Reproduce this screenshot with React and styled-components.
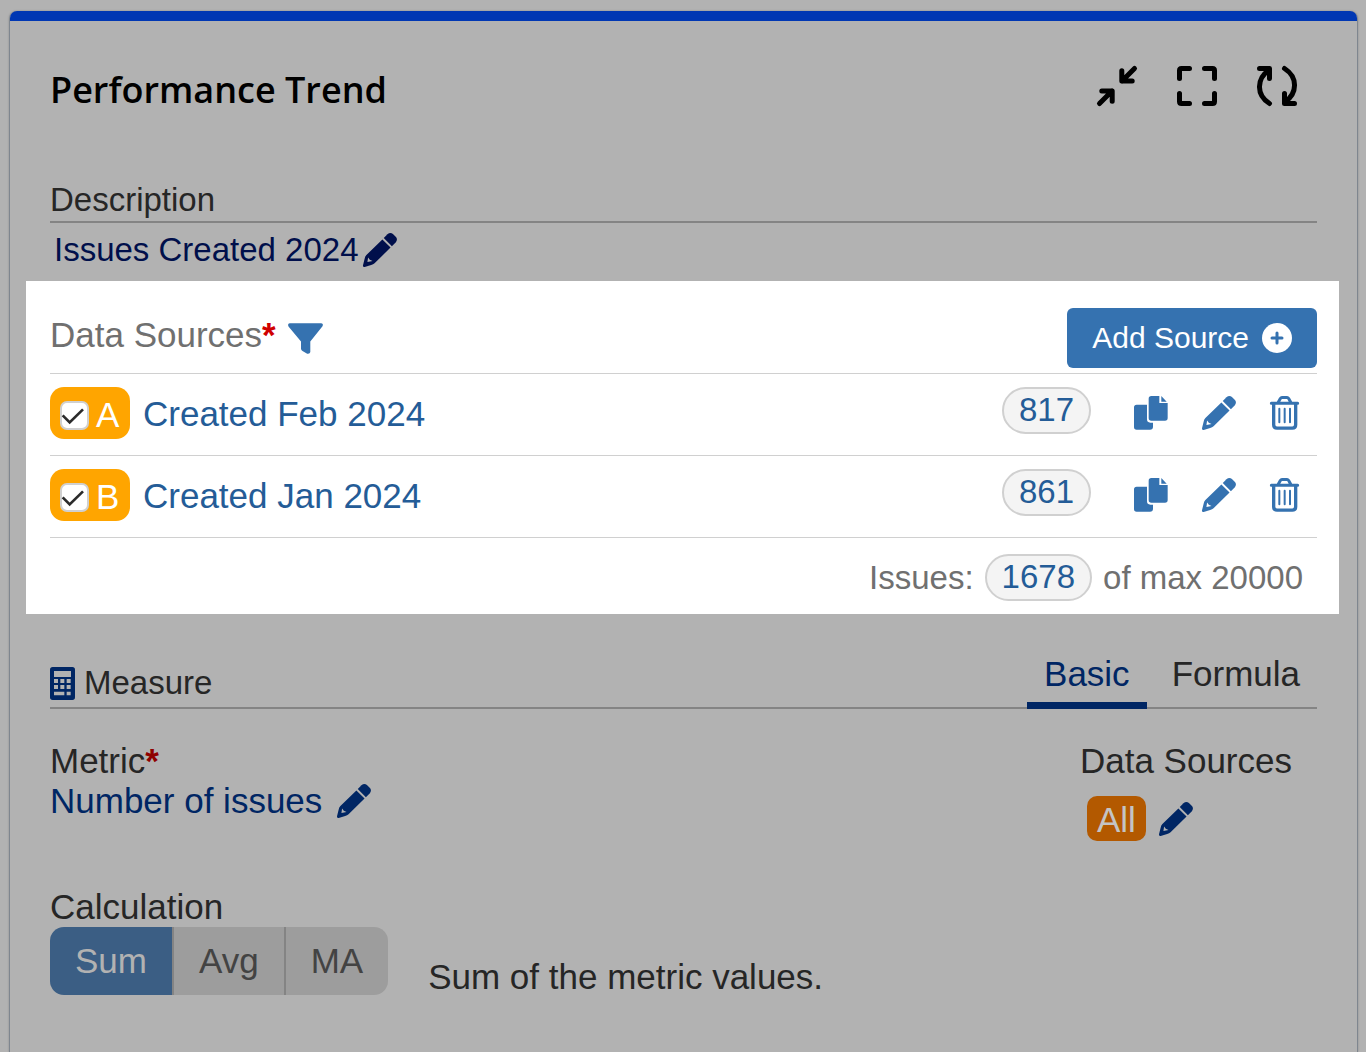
import React, { useState } from "react";
import styled, { createGlobalStyle } from "styled-components";

const c = {
  page: "#b2b2b2",
  rule: "#848484",
  dimText: "#262626",
  dimBlue: "#002664",
  navy: "#000f4b",
  grey: "#707070",
  blue: "#3572b0",
  link: "#245c97",
  line: "#d0d0d0",
};

const GlobalStyle = createGlobalStyle`
  * { box-sizing: border-box; }
  body {
    margin: 0;
    background: ${c.page};
    color: ${c.dimText};
    font-family: "Liberation Sans", Arial, sans-serif;
    font-size: 35px;
    line-height: 40px;
  }
  button { font: inherit; color: inherit; border: 0; padding: 0; background: none; cursor: pointer; }
  a { color: inherit; text-decoration: none; }
  h1, h2, ul, p { margin: 0; padding: 0; font-weight: 400; font-size: inherit; }
  svg { display: block; flex: none; overflow: visible; }
`;

const Card = styled.main`
  margin: 11px 8px 0 9px;
  min-height: calc(100vh - 11px);
  border: 1px solid #7f868f;
  border-width: 0 1px;
  border-radius: 8px 8px 0 0;
  box-shadow: 0 0 2px rgba(0, 0, 0, 0.25);
  &::before {
    content: "";
    display: block;
    height: 10px;
    border-radius: 7px 7px 0 0;
    background: #0037b3;
  }
`;

const Section = styled.section`
  padding: 0 40px;
`;

const Header = styled.header`
  display: flex;
  align-items: center;
  justify-content: space-between;
  padding: 45px 60px 0 40px;
`;

const Title = styled.h1`
  && {
    font-family: "Open Sans", "Noto Sans", sans-serif;
    font-size: 36px;
    font-weight: 600;
  }
  padding-top: 4px;
  margin-bottom: -4px;
  color: #000;
`;

const Tools = styled.div`
  display: flex;
  gap: 40px;
  color: #000;
`;

const Field = styled.div`
  margin-top: 74px;
  font-size: 33px;
`;

const Underlined = styled.h2`
  padding-bottom: 1px;
  border-bottom: 2px solid ${c.rule};
`;

const Inline = styled.div`
  display: flex;
  align-items: center;
  gap: ${(p) => p.$gap || 4}px;
  padding: ${(p) => p.$pad || "0"};
  color: ${(p) => p.$color || "inherit"};
`;

const Spotlight = styled.section`
  margin: 11px 18px 0 16px;
  padding: 27px 22px 13px 24px;
  background: #fff;
  color: ${c.grey};
`;

const SpotHead = styled.div`
  display: flex;
  justify-content: space-between;
  align-items: flex-start;
  padding-bottom: 5px;
`;

const Required = styled.span`
  font-weight: 700;
  color: ${(p) => (p.$dim ? "#8f0000" : "#d00000")};
`;

const IconButton = styled.button`
  color: ${(p) => p.$color || "inherit"};
`;

const FilterButton = styled(IconButton)`
  && { padding-top: 6px; }
`;

const AddButton = styled.button`
  && { padding: 0 25px; color: #fff; background: ${c.blue}; font-size: 30px; }
  height: 60px;
  border-radius: 6px;
  display: flex;
  align-items: center;
  gap: 13px;
`;

const List = styled.ul`
  list-style: none;
  border-top: 1px solid ${c.line};
`;

const Row = styled.li`
  display: flex;
  align-items: flex-start;
  padding: 13px 18px 16px 0;
  border-bottom: 1px solid ${c.line};
`;

const Tag = styled.label`
  display: flex;
  align-items: center;
  gap: 7px;
  width: 80px;
  height: 52px;
  padding: 4px 0 0 10px;
  border-radius: 14px;
  background: #ffa500;
  color: #fff;
`;

const CheckWrap = styled.span`
  display: grid;
  place-items: center;
  svg { grid-area: 1 / 1; pointer-events: none; }
`;

const CheckInput = styled.input`
  grid-area: 1 / 1;
  appearance: none;
  width: 29px;
  height: 29px;
  margin: 0;
  border: 2px solid ${c.line};
  border-radius: 7px;
  background: #fff;
  & + svg { visibility: hidden; }
  &:checked + svg { visibility: visible; }
`;

const SourceLink = styled.a`
  flex: 1;
  padding: 7px 13px 0;
  && { color: ${c.link}; }
`;

const Pill = styled.a`
  height: 47px;
  padding: 1px 15px 0;
  border: 2px solid ${c.line};
  border-radius: 24px;
  background: #f4f4f4;
  && { color: ${c.link}; }
  font-size: 33px;
`;

const Actions = styled.div`
  display: flex;
  align-items: center;
  gap: 34px;
  height: 52px;
  margin-left: 43px;
  color: ${c.blue};
`;

const Total = styled.div`
  display: flex;
  align-items: center;
  justify-content: flex-end;
  gap: 11px;
  padding: 16px 14px 0 0;
  font-size: 33px;
`;

const MeasureBar = styled.div`
  display: flex;
  align-items: flex-end;
  justify-content: space-between;
  margin-top: 40px;
  border-bottom: 2px solid ${c.rule};
`;

const MeasureTitle = styled.h2`
  && { font-size: 33px; }
  display: flex;
  align-items: center;
  gap: 9px;
  padding-bottom: 4px;
  svg { color: ${c.dimBlue}; }
`;

const Tabs = styled.div`
  display: flex;
  gap: 8px;
  margin-bottom: -2px;
`;

const Tab = styled.button`
  && {
    padding: 0 17px 8px;
    border-bottom: 7px solid ${(p) => (p["aria-selected"] ? c.dimBlue : "transparent")};
    color: ${(p) => (p["aria-selected"] ? c.dimBlue : c.dimText)};
  }
`;

const Columns = styled.div`
  display: flex;
  justify-content: space-between;
  padding: 32px 25px 0 0;
`;

const Badge = styled.span`
  padding: 4px 10px 1px;
  border-radius: 10px;
  background: #b35900;
  color: #c4c4c4;
`;

const Calculation = styled.div`
  padding-top: 46px;
`;

const CalcRow = styled.div`
  display: flex;
  align-items: flex-start;
  gap: 40px;
`;

const Segments = styled.div`
  display: flex;
  border-radius: 14px;
  overflow: hidden;
`;

const Segment = styled.button`
  && {
    padding: 0 25px;
    background: ${(p) => (p["aria-pressed"] ? "#3b5e84" : "#9d9d9d")};
    color: ${(p) => (p["aria-pressed"] ? c.page : "#434343")};
  }
  height: 68px;
  & + & { border-left: 2px solid ${c.rule}; }
`;

const Hint = styled.p`
  padding-top: 30px;
`;

const Stroke = ({ d }) => (
  <svg width="40" height="40" viewBox="0 0 40 40" fill="none" stroke="currentColor" strokeWidth="5" strokeLinecap="round" strokeLinejoin="round" aria-hidden="true">
    <path d={d} />
  </svg>
);

const Pencil = ({ notch = "#fff" }) => (
  <svg width="34" height="34" viewBox="0 0 100 100" fill="currentColor" aria-hidden="true">
    <path d="M61 15L72 4Q80-3 88 3L97 12Q103 20 96 28L85 39Z" />
    <path d="M57 19L81 43L34 89Q30 93 24 94L5 100Q-1 101 0 95L5 75Q6 69 10 65Z" />
    <path d="M15 72L13 85L28 82L20 79Z" fill={notch} />
  </svg>
);

const Copy = () => (
  <svg width="34" height="34" viewBox="0 0 102 102" fill="currentColor" aria-hidden="true">
    <path d="M52 0H76V21H101V66Q101 74 93 74H52Q44 74 44 66V8Q44 0 52 0Z" />
    <path d="M82 0L98 17H82Z" />
    <path d="M8 26H39V70Q39 80 49 80H57V92Q57 101 48 101H8Q0 101 0 93V34Q0 26 8 26Z" />
  </svg>
);

const Trash = () => (
  <svg width="29" height="34" viewBox="0 0 87 101" fill="none" stroke="currentColor" aria-hidden="true">
    <path d="M4 21H83M24 20L31 7Q33 4 36 4H51Q54 4 56 7L63 20" strokeWidth="9" strokeLinecap="round" />
    <path d="M11 22V86Q11 96 21 96H67Q77 96 77 86V22" strokeWidth="10" />
    <path d="M28 38V78M44 38V78M60 38V78" strokeWidth="6" strokeLinecap="round" />
  </svg>
);

const Funnel = () => (
  <svg width="35" height="31" viewBox="0 0 35 31" fill="currentColor" aria-hidden="true">
    <path d="M2 .3H33Q35.800.6 34.500 3.200L22.300 18.500V29Q22 31.200 19.200 30.700L14.500 28Q13 27 13 25.500V18.500L.5 3.400Q-.8.7 2 .3Z" />
  </svg>
);

const PlusCircle = () => (
  <svg width="30" height="30" viewBox="0 0 30 30" aria-hidden="true">
    <circle cx="15" cy="15" r="15" fill="#fff" />
    <path d="M15 10V20M10 15H20" stroke={c.blue} strokeWidth="3" strokeLinecap="round" />
  </svg>
);

const Calculator = () => (
  <svg width="25" height="33" viewBox="0 0 75 99" fill="currentColor" fillRule="evenodd" aria-hidden="true">
    <path d="M8 0H67Q75 0 75 8V91Q75 99 67 99H8Q0 99 0 91V8Q0 0 8 0ZM12 12V30H63V12ZM12 36V48H24V36ZM31 36V48H43V36ZM50 36V48H62V36ZM12 54V66H24V54ZM31 54V66H43V54ZM50 54V66H62V54ZM12 74V85H43V74ZM50 74V85H62V74Z" />
  </svg>
);

const sources = [
  { id: "A", name: "Created Feb 2024", count: 817 },
  { id: "B", name: "Created Jan 2024", count: 861 },
];

function SourceRow({ source }) {
  const [on, setOn] = useState(true);
  return (
    <Row>
      <Tag>
        <CheckWrap>
          <CheckInput type="checkbox" checked={on} onChange={(e) => setOn(e.target.checked)} />
          <svg width="29" height="29" viewBox="0 0 87 87" fill="none" stroke="#2b2b2b" strokeWidth="8" aria-hidden="true">
            <path d="M8 43L29 64L69 25" />
          </svg>
        </CheckWrap>
        {source.id}
      </Tag>
      <SourceLink href="#source">{source.name}</SourceLink>
      <Pill href="#issues">{source.count}</Pill>
      <Actions>
        <IconButton aria-label="Copy source"><Copy /></IconButton>
        <IconButton aria-label="Edit source"><Pencil /></IconButton>
        <IconButton aria-label="Delete source"><Trash /></IconButton>
      </Actions>
    </Row>
  );
}

export default function App() {
  const [tab, setTab] = useState("Basic");
  const [calc, setCalc] = useState("Sum");
  return (
    <>
      <GlobalStyle />
      <Card>
        <Header>
          <Title>Performance Trend</Title>
          <Tools>
            <IconButton aria-label="Minimize">
              <Stroke d="M24.800 4.800V15H35.200M37.500 2.500L25 15M4.800 25H15.200V35.200M2.500 37.500L15 25" />
            </IconButton>
            <IconButton aria-label="Full screen">
              <Stroke d="M2.500 12.500V4.500Q2.500 2.500 4.500 2.500H12.500M27.500 2.500H35.500Q37.500 2.500 37.500 4.500V12.500M37.500 27.500V35.500Q37.500 37.500 35.500 37.500H27.500M12.500 37.500H4.500Q2.500 37.500 2.500 35.500V27.500" />
            </IconButton>
            <IconButton aria-label="Refresh">
              <Stroke d="M2.500 2.500H12.500V12.500M12.500 37.500C-.8 29-.8 13 12 4M37.500 37.500H27.500V27.500M27.500 2.500C40.800 11 40.800 27 28 36" />
            </IconButton>
          </Tools>
        </Header>

        <Section>
          <Field>
            <Underlined>Description</Underlined>
            <Inline $pad="7px 0 0 4px" $color={c.navy}>
              <span>Issues Created 2024</span>
              <IconButton aria-label="Edit description"><Pencil notch={c.page} /></IconButton>
            </Inline>
          </Field>
        </Section>

        <Spotlight>
          <SpotHead>
            <Inline $gap={12} $pad="7px 0 0">
              <h2>Data Sources<Required>*</Required></h2>
              <FilterButton aria-label="Filter" $color={c.blue}><Funnel /></FilterButton>
            </Inline>
            <AddButton>Add Source<PlusCircle /></AddButton>
          </SpotHead>
          <List>
            {sources.map((s) => <SourceRow key={s.id} source={s} />)}
          </List>
          <Total>
            <span>Issues:</span>
            <Pill href="#issues">1678</Pill>
            <span>of max 20000</span>
          </Total>
        </Spotlight>

        <Section>
          <MeasureBar>
            <MeasureTitle><Calculator />Measure</MeasureTitle>
            <Tabs role="tablist">
              {["Basic", "Formula"].map((t) => (
                <Tab key={t} role="tab" aria-selected={tab === t} onClick={() => setTab(t)}>{t}</Tab>
              ))}
            </Tabs>
          </MeasureBar>
          <Columns>
            <div>
              <h2>Metric<Required $dim>*</Required></h2>
              <Inline $gap={15} $color={c.dimBlue}>
                <a href="#metric">Number of issues</a>
                <IconButton aria-label="Edit metric"><Pencil notch={c.page} /></IconButton>
              </Inline>
            </div>
            <div>
              <h2>Data Sources</h2>
              <Inline $gap={13} $pad="15px 0 0 7px" $color={c.dimBlue}>
                <Badge>All</Badge>
                <IconButton aria-label="Edit metric sources"><Pencil notch={c.page} /></IconButton>
              </Inline>
            </div>
          </Columns>
          <Calculation>
            <h2>Calculation</h2>
            <CalcRow>
              <Segments role="group" aria-label="Calculation">
                {["Sum", "Avg", "MA"].map((s) => (
                  <Segment key={s} aria-pressed={calc === s} onClick={() => setCalc(s)}>{s}</Segment>
                ))}
              </Segments>
              <Hint>Sum of the metric values.</Hint>
            </CalcRow>
          </Calculation>
        </Section>
      </Card>
    </>
  );
}
